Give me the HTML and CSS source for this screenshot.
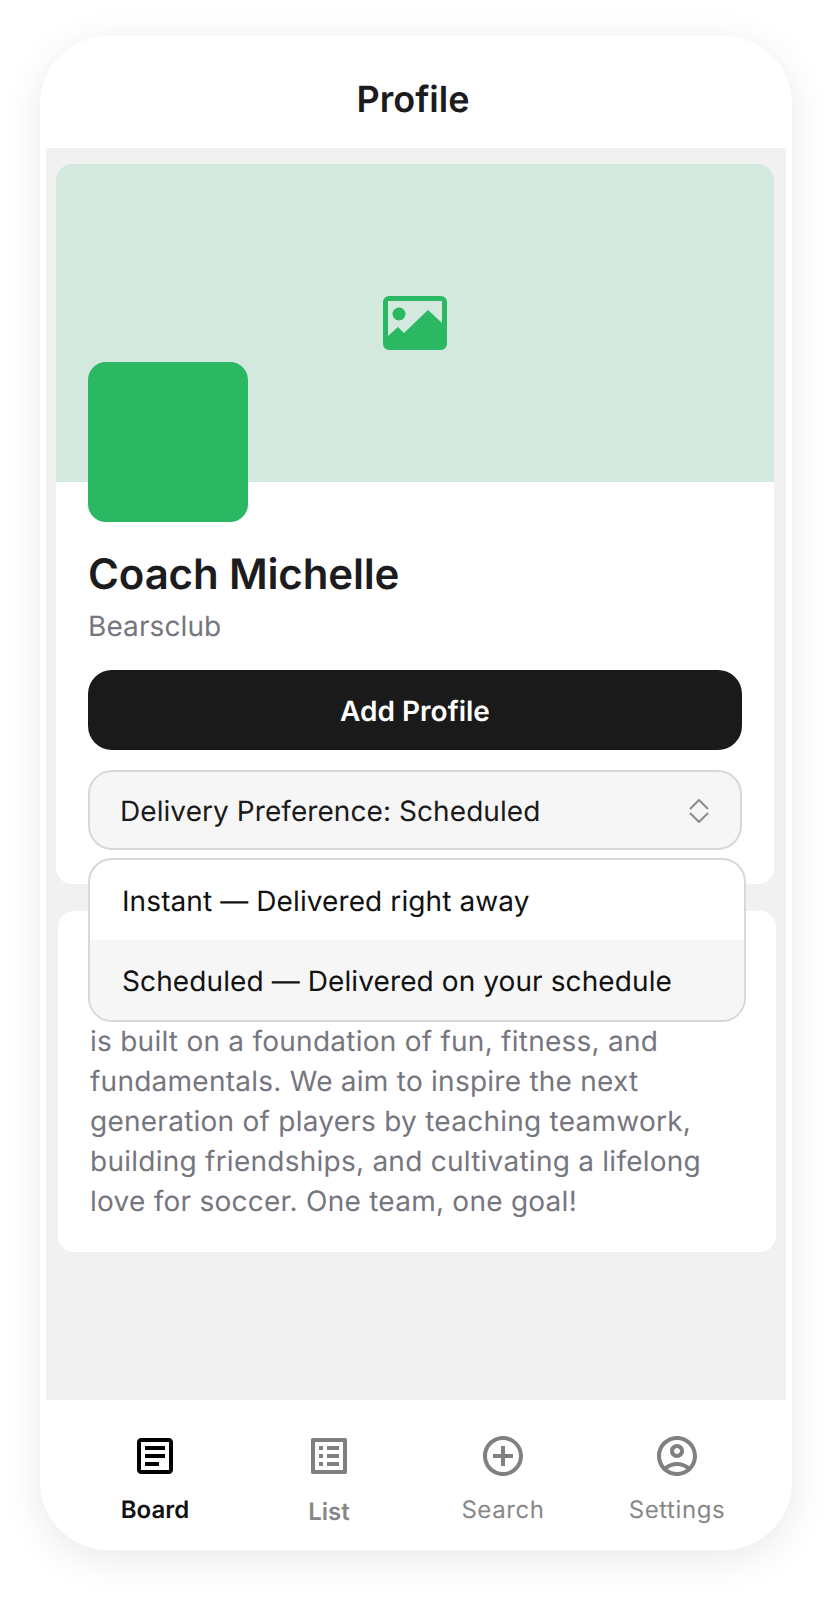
FILE: index.html
```html
<!DOCTYPE html>
<html>
	<head>
		<meta charset="UTF-8">
		<title>Profile</title>
		<link rel="stylesheet" href="styles.css">
	</head>
	<body>
		<div class="phone">
			<div class="header">Profile</div>
			<div class="content">
				<div class="card profileCard">
					<div class="banner">
						<svg class="bannerIcon" width="64" height="54" viewBox="0 0 64 54">
							<path fill-rule="evenodd" d="M6 0h52a6 6 0 0 1 6 6v42a6 6 0 0 1-6 6H6a6 6 0 0 1-6-6V6a6 6 0 0 1 6-6zM5 5v35l10-9 6 6 24-23 14 13V5z"/>
							<circle cx="16" cy="18" r="6.5"/>
						</svg>
					</div>
					<div class="profileBody">
						<div class="avatar"></div>
						<h1 class="name">Coach Michelle</h1>
						<div class="club">Bearsclub</div>
						<button class="addBtn">Add Profile</button>
						<div class="selectWrap">
							<div class="select">
								<span>Delivery Preference: Scheduled</span>
								<svg width="20" height="24" viewBox="0 0 20 24">
									<path d="M1 10l9-9 9 9M1 14l9 9 9-9"/>
								</svg>
							</div>
							<ul class="menu">
								<li>Instant — Delivered right away</li>
								<li class="current">Scheduled — Delivered on your schedule</li>
							</ul>
						</div>
					</div>
				</div>
				<div class="card aboutCard">
					<p>is built on a foundation of fun, fitness, and fundamentals. We aim to inspire the next generation of players by teaching teamwork, building friendships, and cultivating a lifelong love for soccer. One team, one goal!</p>
				</div>
			</div>
			<div class="tabs">
				<div class="tab active">
					<svg width="48" height="48" viewBox="0 0 24 24"><path d="M19 5v14H5V5h14m0-2H5c-1.1 0-2 .9-2 2v14c0 1.1.9 2 2 2h14c1.1 0 2-.9 2-2V5c0-1.1-.9-2-2-2zM14 17H7v-2h7v2zm3-4H7v-2h10v2zm0-4H7V7h10v2z"/></svg>
					<span>Board</span>
				</div>
				<div class="tab listTab">
					<svg width="48" height="48" viewBox="0 0 24 24"><path d="M19 5v14H5V5h14m1.1-2H3.9c-.5 0-.9.4-.9.9v16.2c0 .4.4.9.9.9h16.2c.4 0 .9-.5.9-.9V3.9c0-.5-.5-.9-.9-.9zM11 7h6v2h-6V7zm0 4h6v2h-6v-2zm0 4h6v2h-6zM7 7h2v2H7zm0 4h2v2H7zm0 4h2v2H7z"/></svg>
					<span>List</span>
				</div>
				<div class="tab">
					<svg width="48" height="48" viewBox="0 0 24 24"><path d="M13 7h-2v4H7v2h4v4h2v-4h4v-2h-4V7zm-1-5C6.48 2 2 6.48 2 12s4.48 10 10 10 10-4.48 10-10S17.52 2 12 2zm0 18c-4.41 0-8-3.59-8-8s3.59-8 8-8 8 3.59 8 8-3.59 8-8 8z"/></svg>
					<span>Search</span>
				</div>
				<div class="tab">
					<svg width="48" height="48" viewBox="0 0 24 24"><path d="M12 2C6.48 2 2 6.48 2 12s4.48 10 10 10 10-4.48 10-10S17.52 2 12 2zM7.35 18.5C8.66 17.56 10.26 17 12 17s3.34.56 4.65 1.5c-1.31.94-2.91 1.5-4.65 1.5s-3.34-.56-4.65-1.5zm10.79-1.38C16.45 15.8 14.32 15 12 15s-4.45.8-6.14 2.12C4.7 15.73 4 13.95 4 12c0-4.42 3.58-8 8-8s8 3.58 8 8c0 1.95-.7 3.73-1.86 5.12zM12 6c-1.93 0-3.5 1.57-3.5 3.5S10.07 13 12 13s3.5-1.57 3.5-3.5S13.93 6 12 6zm0 5c-.83 0-1.5-.67-1.5-1.5S11.17 8 12 8s1.5.67 1.5 1.5S12.83 11 12 11z"/></svg>
					<span>Settings</span>
				</div>
			</div>
		</div>
	</body>
</html>
```

FILE: styles.css
```css
html, body{
	margin: 0;
	padding: 0;
	background: #FFF;
}
body{
	height: 1602px;
	padding: 36px 48px 0 40px;
	box-sizing: border-box;
	font-family: Inter, "Liberation Sans", sans-serif;
	text-rendering: geometricPrecision;
	overflow: hidden;
}
.phone{
	width: 752px;
	height: 1514px;
	background: #FFF;
	border-radius: 68px;
	box-shadow: 0 8px 40px rgba(0,0,0,0.09);
	display: flex;
	flex-direction: column;
	overflow: hidden;
}
.header{
	height: 112px;
	flex: none;
	display: flex;
	align-items: center;
	justify-content: center;
	padding: 14px 6px 0 0;
	box-sizing: border-box;
	font-size: 36px;
	font-weight: 600;
	color: #1C1C1E;
}
.content{
	flex: 1;
	margin: 0 6px;
	padding: 16px 12px 0 10px;
	background: #F1F1F1;
}
.card{
	background: #FFF;
	border-radius: 16px;
}
.profileCard{
	height: 720px;
	margin-bottom: 27px;
}
.banner{
	height: 318px;
	background: #D4E9DD;
	border-radius: 16px 16px 0 0;
	display: flex;
	align-items: center;
	justify-content: center;
}
.bannerIcon{
	fill: #2AB863;
	margin-top: -1px;
}
.profileBody{
	padding: 0 32px;
}
.avatar{
	width: 160px;
	height: 160px;
	margin-top: -120px;
	background: #2AB863;
	border-radius: 18px;
	position: relative;
}
.name{
	margin: 27px 0 0;
	font-size: 42px;
	line-height: 52px;
	font-weight: 600;
	letter-spacing: -0.15px;
	color: #1C1C1E;
}
.club{
	margin-top: 5px;
	font-size: 28px;
	line-height: 40px;
	letter-spacing: 0.1px;
	color: #76767F;
}
.addBtn{
	display: block;
	width: 100%;
	height: 80px;
	margin-top: 24px;
	padding: 1px 0 0;
	border: none;
	border-radius: 24px;
	background: #1A1A1A;
	color: #FFF;
	font-family: inherit;
	text-rendering: inherit;
	font-size: 28px;
	font-weight: 600;
}
.selectWrap{
	position: relative;
	margin-top: 20px;
}
.select{
	height: 80px;
	padding: 2px 31px 0 30px;
	box-sizing: border-box;
	border: solid 2px #D8D8D8;
	border-radius: 24px;
	background: #F6F6F6;
	display: flex;
	align-items: center;
	justify-content: space-between;
	font-size: 28px;
	letter-spacing: 0.07px;
	color: #1A1A1A;
}
.select svg{
	fill: none;
	stroke: #8A8A92;
	stroke-width: 2;
}
.menu{
	position: absolute;
	left: 0;
	top: 88px;
	width: 658px;
	margin: 0;
	padding: 0;
	list-style: none;
	box-sizing: border-box;
	border: solid 2px #D8D8D8;
	border-radius: 24px;
	background: #FFF;
	overflow: hidden;
	font-size: 28px;
	letter-spacing: 0.1px;
	color: #111;
}
.menu li{
	height: 80px;
	padding: 2px 30px 0 32px;
	box-sizing: border-box;
	display: flex;
	align-items: center;
}
.menu li.current{
	background: #F6F6F6;
}
.aboutCard{
	margin-left: 2px;
	margin-right: -2px;
	height: 341px;
	padding: 110px 32px 0;
	box-sizing: border-box;
}
.aboutCard p{
	margin: 0;
	font-size: 28px;
	line-height: 40px;
	letter-spacing: 0.25px;
	color: #76767F;
}
.tabs{
	height: 150px;
	flex: none;
	padding: 0 28px;
	display: grid;
	grid-template-columns: repeat(4, 1fr);
}
.tab{
	display: flex;
	flex-direction: column;
	align-items: center;
	padding-top: 32px;
	gap: 15px;
	color: #878787;
	font-size: 24px;
	letter-spacing: 0.6px;
}
.tab svg{
	fill: #808080;
}
.tab.active{
	color: #111;
	font-weight: 600;
	letter-spacing: 0;
}
.tab.active svg{
	fill: #000;
}
.listTab span{
	font-weight: 600;
	margin-top: 2px;
	letter-spacing: 0;
}
```
